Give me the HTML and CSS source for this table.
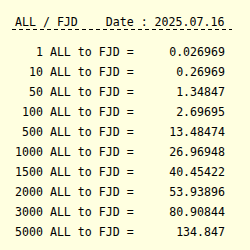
FILE: index.html
```html
<!DOCTYPE html>
<html>
<head>
<meta charset="utf-8">
<link rel="stylesheet" href="styles.css">
</head>
<body>
<div class="board">
  <div class="head">ALL / FJD    Date : 2025.07.16</div>
  <div class="rows">
    <div class="row"><span class="label">   1 ALL to FJD =</span><span class="val">0.026969</span></div>
    <div class="row"><span class="label">  10 ALL to FJD =</span><span class="val">0.26969</span></div>
    <div class="row"><span class="label">  50 ALL to FJD =</span><span class="val">1.34847</span></div>
    <div class="row"><span class="label"> 100 ALL to FJD =</span><span class="val">2.69695</span></div>
    <div class="row"><span class="label"> 500 ALL to FJD =</span><span class="val">13.48474</span></div>
    <div class="row"><span class="label">1000 ALL to FJD =</span><span class="val">26.96948</span></div>
    <div class="row"><span class="label">1500 ALL to FJD =</span><span class="val">40.45422</span></div>
    <div class="row"><span class="label">2000 ALL to FJD =</span><span class="val">53.93896</span></div>
    <div class="row"><span class="label">3000 ALL to FJD =</span><span class="val">80.90844</span></div>
    <div class="row"><span class="label">5000 ALL to FJD =</span><span class="val">134.847</span></div>
  </div>
</div>
</body>
</html>
```
FILE: styles.css
```css
html, body {
  margin: 0;
  padding: 0;
  background: #ffffe0;
}
.board {
  margin: 16px 0 0 12px;
  width: 220px;
  font-family: "DejaVu Sans Mono", monospace;
  font-size: 11.6px;
  color: #000;
}
.head {
  padding: 0 3px 1px;
  line-height: 13px;
  white-space: pre;
  background: repeating-linear-gradient(to right, #000 0 4px, transparent 4px 7px) left bottom / 100% 1px no-repeat;
}
.rows {
  margin-top: 12px;
  padding: 0 7px 0 3px;
}
.row {
  display: flex;
  line-height: 20px;
  white-space: pre;
}
.val {
  margin-left: auto;
}
```
